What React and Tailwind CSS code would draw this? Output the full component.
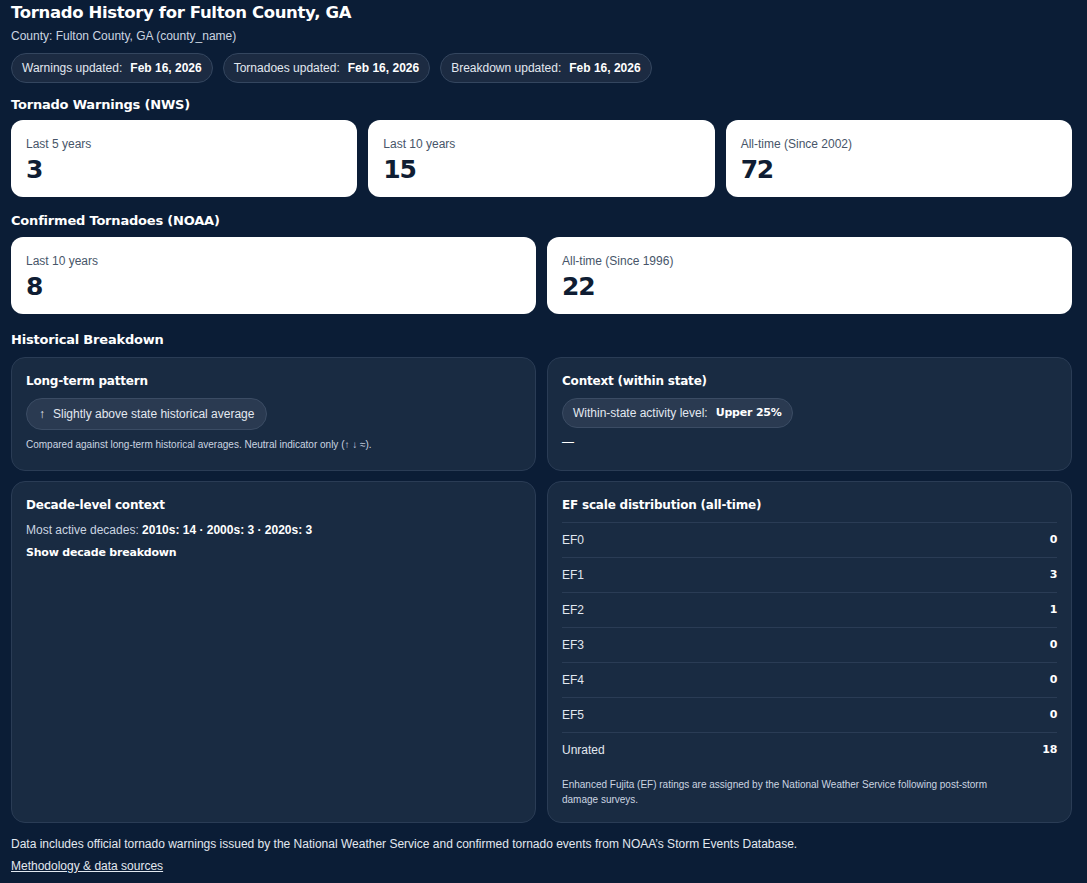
import React from "react";

const body = { fontFamily: '"Liberation Sans", Arial, sans-serif' };
const HEAD = "font-['DejaVu_Sans',sans-serif] font-bold";

function Pill({ label, value }) {
  return (
    <div className="flex items-center h-[30px] px-[10px] rounded-full bg-[#1c2b42] border border-[#34465f] text-[12px] text-[#e2e8f0]">
      <span>{label}</span>
      <span className="ml-[8px] font-bold text-white">{value}</span>
    </div>
  );
}

function StatCard({ label, value }) {
  return (
    <div className="flex-1 h-[77px] rounded-[12px] bg-white px-[15px] pt-[16px]">
      <div className="text-[12px] leading-[16px] text-[#475569]">{label}</div>
      <div className={"mt-[3px] text-[25px] leading-[29px] tracking-[-0.05em] text-[#0f1d33] " + HEAD}>{value}</div>
    </div>
  );
}

function Heading({ children, className = "" }) {
  return (
    <div className={HEAD + " text-white text-[13px] leading-[18px] tracking-[-0.2px] " + className}>{children}</div>
  );
}

function PanelTitle({ children }) {
  return <div className={HEAD + " text-white text-[12px] leading-[17px] tracking-[-0.2px]"}>{children}</div>;
}

function Panel({ children, className = "" }) {
  return (
    <div className={"flex-1 rounded-[14px] bg-[#192b42] border border-[#2a3c55] px-[14px] pt-[15px] " + className}>{children}</div>
  );
}

const efRows = [
  ["EF0", "0"],
  ["EF1", "3"],
  ["EF2", "1"],
  ["EF3", "0"],
  ["EF4", "0"],
  ["EF5", "0"],
  ["Unrated", "18"],
];

export default function App() {
  return (
    <div className="min-h-[883px] w-full bg-[#0b1d36] text-white" style={body}>
      <div className="w-[1061px] ml-[11px]">
        <div className={"pt-[2px] text-[16.5px] leading-[22px] tracking-[-0.35px] text-white " + HEAD}>
          Tornado History for Fulton County, GA
        </div>
        <div className="mt-[4px] text-[12px] leading-[16px] text-[#cbd5e1]">County: Fulton County, GA (county_name)</div>
        <div className="mt-[9px] flex gap-[10px]">
          <Pill label="Warnings updated:" value="Feb 16, 2026" />
          <Pill label="Tornadoes updated:" value="Feb 16, 2026" />
          <Pill label="Breakdown updated:" value="Feb 16, 2026" />
        </div>

        <Heading className="mt-[13px]">Tornado Warnings (NWS)</Heading>
        <div className="mt-[6px] flex gap-[11px]">
          <StatCard label="Last 5 years" value="3" />
          <StatCard label="Last 10 years" value="15" />
          <StatCard label="All-time (Since 2002)" value="72" />
        </div>

        <Heading className="mt-[15px]">Confirmed Tornadoes (NOAA)</Heading>
        <div className="mt-[7px] flex gap-[11px]">
          <StatCard label="Last 10 years" value="8" />
          <StatCard label="All-time (Since 1996)" value="22" />
        </div>

        <Heading className="mt-[17px]">Historical Breakdown</Heading>
        <div className="mt-[8px] flex gap-[11px]">
          <Panel className="h-[114px]">
            <PanelTitle>Long-term pattern</PanelTitle>
            <div className="mt-[8px] inline-flex items-center h-[32px] px-[12px] rounded-full bg-[#2a3a51] border border-[#3b4c64] text-[12px] text-[#e2e8f0]">
              <span className="mr-[8px]">↑</span>Slightly above state historical average
            </div>
            <div className="mt-[8px] text-[10px] leading-[14px] text-[#cbd5e1]">
              Compared against long-term historical averages. Neutral indicator only (↑ ↓ ≈).
            </div>
          </Panel>
          <Panel className="h-[114px]">
            <PanelTitle>Context (within state)</PanelTitle>
            <div className="mt-[8px] inline-flex items-center h-[30px] px-[10px] rounded-full bg-[#2a3a51] border border-[#3b4c64] text-[12px] text-[#e2e8f0]">
              Within-state activity level:
              <span className={"ml-[8px] text-white text-[11px] tracking-[-0.2px] " + HEAD}>Upper 25%</span>
            </div>
            <div className="mt-[6px] text-[12px] leading-[16px] text-white">—</div>
          </Panel>
        </div>

        <div className="mt-[10px] flex gap-[11px]">
          <Panel className="h-[342px]">
            <PanelTitle>Decade-level context</PanelTitle>
            <div className="mt-[8px] text-[12px] leading-[16px] text-[#cbd5e1]">
              Most active decades: <span className="text-white font-bold">2010s: 14 · 2000s: 3 · 2020s: 3</span>
            </div>
            <div className={"mt-[7px] text-[11px] leading-[16px] tracking-[-0.2px] text-white " + HEAD}>Show decade breakdown</div>
          </Panel>
          <Panel className="h-[342px]">
            <PanelTitle>EF scale distribution (all-time)</PanelTitle>
            <div className="mt-[8px]">
              {efRows.map(([k, v]) => (
                <div key={k} className="flex items-center justify-between h-[35px] text-[12px] text-[#e2e8f0] border-t border-[#2a3c55]">
                  <span>{k}</span>
                  <span className={"text-white text-[11px] tracking-[-0.3px] " + HEAD}>{v}</span>
                </div>
              ))}
            </div>
            <div className="mt-[10px] text-[10px] leading-[15px] text-[#cbd5e1] pr-[50px]">
              Enhanced Fujita (EF) ratings are assigned by the National Weather Service following post-storm damage surveys.
            </div>
          </Panel>
        </div>

        <div className="mt-[13px] text-[12px] leading-[16px] text-[#e2e8f0]">
          Data includes official tornado warnings issued by the National Weather Service and confirmed tornado events from NOAA’s Storm Events Database.
        </div>
        <div className="mt-[6px] text-[12px] leading-[16px] text-[#e2e8f0] underline">Methodology &amp; data sources</div>
      </div>
    </div>
  );
}
